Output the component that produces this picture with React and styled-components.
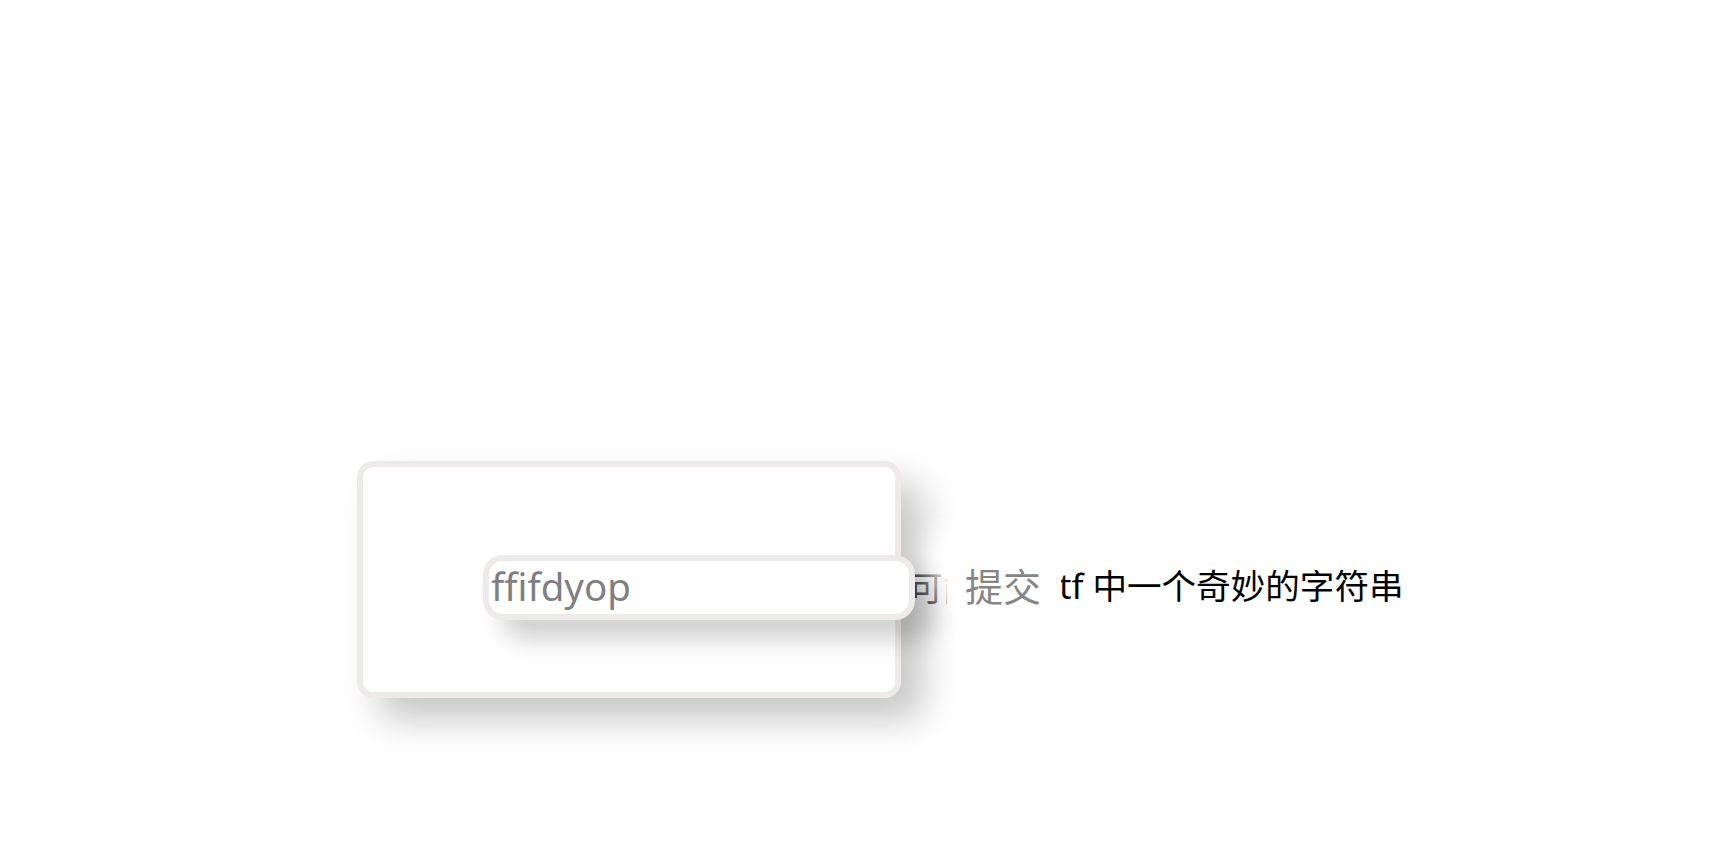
import React from "react";
import styled, { createGlobalStyle } from "styled-components";

const Global = createGlobalStyle`
  html, body { margin: 0; padding: 0; background: #ffffff; }
  body { font-family: "Noto Sans", "Noto Sans CJK SC", sans-serif; }
`;

const Page = styled.main`
  width: 1726px;
  height: 868px;
  box-sizing: border-box;
  padding: 461px 0 0 357px;
  overflow: hidden;
`;

const Row = styled.div`
  display: flex;
  align-items: baseline;
`;

const Card = styled.form`
  box-sizing: border-box;
  width: 544px;
  height: 237px;
  flex: none;
  display: flex;
  align-items: flex-start;
  padding: 88px 0 0 120px;
  border: 6px solid #eeeaea;
  border-radius: 16px;
  background: #ffffff;
  box-shadow: 22px 22px 36px rgba(0, 0, 0, 0.22), -12px -12px 24px rgba(255, 255, 255, 1);
  margin-right: 8px;
`;

const Field = styled.input`
  box-sizing: border-box;
  flex: none;
  position: relative;
  z-index: 1;
  width: 432px;
  height: 65px;
  margin-right: -120px;
  padding: 0 0 3px 2px;
  border: 6px solid #eeeaea;
  border-radius: 20px;
  background: #ffffff;
  font-family: "Noto Sans", "Noto Sans CJK SC", sans-serif;
  font-size: 38.5px;
  color: #7f7f7f;
  outline: none;
  box-shadow: 20px 20px 25px rgba(0, 0, 0, 0.18);
  &::placeholder { color: #7f7f7f; opacity: 1; }
`;

const Hint = styled.span`
  display: inline-block;
  width: 38px;
  overflow: hidden;
  white-space: nowrap;
  flex: none;
  font-size: 34px;
  color: #3c3c3c;
  font-family: "Noto Sans CJK SC", sans-serif;
`;

const Submit = styled.button`
  flex: none;
  margin: 0;
  padding: 16px 20px 10px 18px;
  border: none;
  border-radius: 22px;
  background: #ffffff;
  color: #858585;
  font-family: "Noto Sans CJK SC", sans-serif;
  font-size: 38px;
  box-shadow: -14px -14px 24px rgba(255, 255, 255, 1);
  position: relative;
`;

const Tail = styled.span`
  flex: none;
  align-self: flex-start;
  margin: 98px 0 0 -2px;
  white-space: pre;
  font-size: 34.6px;
  color: #000000;
  font-family: "Noto Sans", "Noto Sans CJK SC", sans-serif;
`;

export default function App() {
  return (
    <>
      <Global />
      <Page>
        <Row>
          <Card onSubmit={(e) => e.preventDefault()}>
            <Field placeholder="ffifdyop" />
          </Card>
          <Hint>可能是</Hint>
          <Submit type="button">提交</Submit>
          <Tail>tf 中一个奇妙的字符串</Tail>
        </Row>
      </Page>
    </>
  );
}
